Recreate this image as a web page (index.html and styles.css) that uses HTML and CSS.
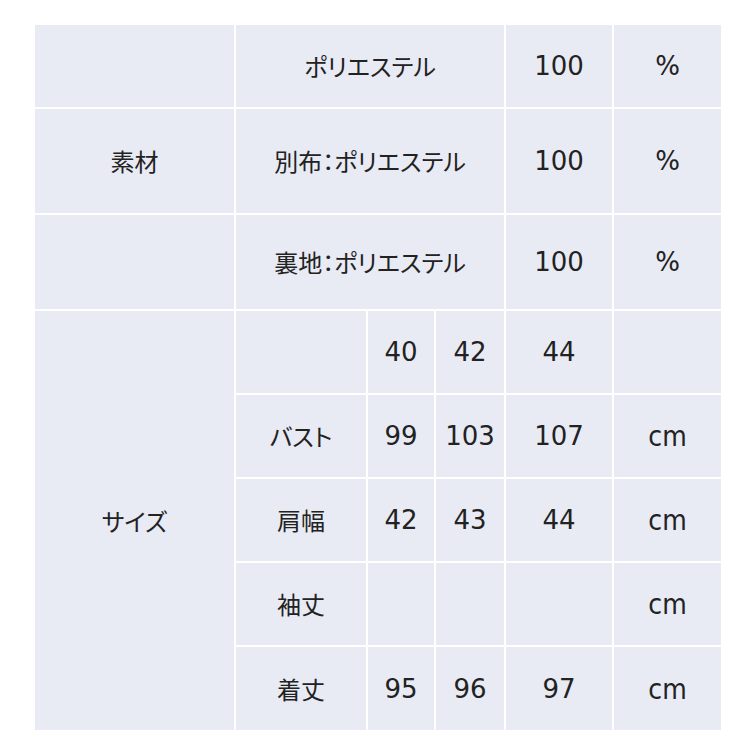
FILE: index.html
```html
<!DOCTYPE html>
<html lang="ja">
<head>
<meta charset="utf-8">
<title>素材・サイズ</title>
<link rel="stylesheet" href="styles.css">
</head>
<body>
<div class="page">
  <div class="spec">
    <div class="cell"></div>
    <div class="cell wide">ポリエステル</div>
    <div class="cell num">100</div>
    <div class="cell num">%</div>

    <div class="cell">素材</div>
    <div class="cell wide">別布：ポリエステル</div>
    <div class="cell num">100</div>
    <div class="cell num">%</div>

    <div class="cell"></div>
    <div class="cell wide">裏地：ポリエステル</div>
    <div class="cell num">100</div>
    <div class="cell num">%</div>

    <div class="cell tall">サイズ</div>
    <div class="cell"></div>
    <div class="cell num">40</div>
    <div class="cell num">42</div>
    <div class="cell num">44</div>
    <div class="cell"></div>

    <div class="cell">バスト</div>
    <div class="cell num">99</div>
    <div class="cell num">103</div>
    <div class="cell num">107</div>
    <div class="cell unit">cm</div>

    <div class="cell">肩幅</div>
    <div class="cell num">42</div>
    <div class="cell num">43</div>
    <div class="cell num">44</div>
    <div class="cell unit">cm</div>

    <div class="cell">袖丈</div>
    <div class="cell num"></div>
    <div class="cell num"></div>
    <div class="cell num"></div>
    <div class="cell unit">cm</div>

    <div class="cell">着丈</div>
    <div class="cell num">95</div>
    <div class="cell num">96</div>
    <div class="cell num">97</div>
    <div class="cell unit">cm</div>
  </div>
</div>
</body>
</html>
```

FILE: styles.css
```css
html, body {
  margin: 0;
  padding: 0;
  background: #ffffff;
}

.page {
  padding: 25px 0 0 35px;
}

.spec {
  display: grid;
  grid-template-columns: 199px 130px 66px 68px 106px 107px;
  grid-template-rows: 82px 104px 94px 82px 82px 82px 82px 83px;
  gap: 2px;
  width: 686px;
  background: #ffffff;
}

.cell {
  background: #e8eaf4;
  display: flex;
  align-items: center;
  justify-content: center;
  color: #222222;
  font-family: "Noto Sans CJK JP", sans-serif;
  font-size: 24px;
  font-feature-settings: "palt";
  line-height: 1;
}

.cell.num {
  font-family: "DejaVu Sans", sans-serif;
  font-size: 26px;
}

.cell.unit {
  font-family: "DejaVu Sans Condensed", "DejaVu Sans", sans-serif;
  font-stretch: condensed;
  font-size: 28px;
  padding-top: 2px;
}

.cell.wide {
  grid-column: span 3;
}

.cell.tall {
  grid-row: span 5;
}
```
